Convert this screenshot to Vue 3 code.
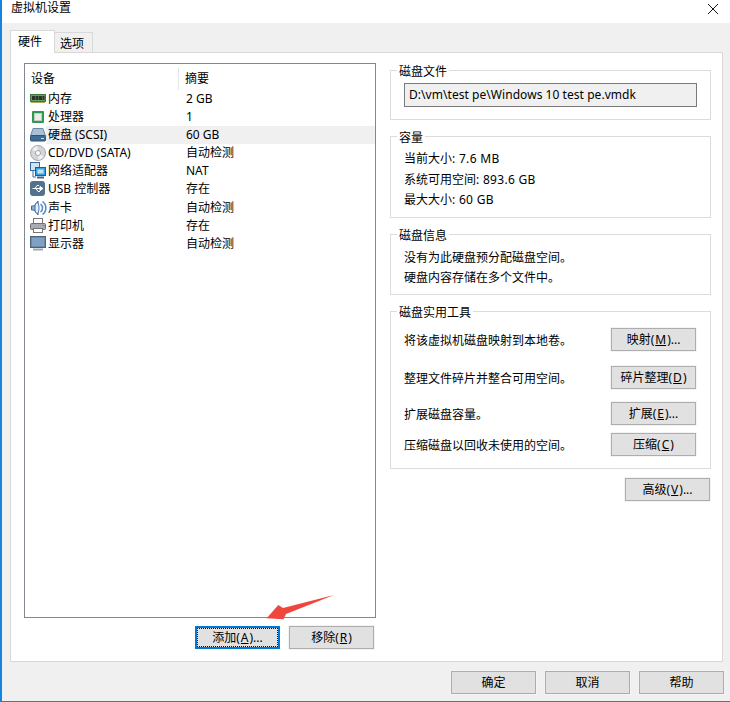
<script setup>
const devices = [
  { id: 'mem', name: '内存', value: '2 GB' },
  { id: 'cpu', name: '处理器', value: '1' },
  { id: 'hdd', name: '硬盘 (SCSI)', value: '60 GB', active: true },
  { id: 'cd', name: 'CD/DVD (SATA)', value: '自动检测' },
  { id: 'net', name: '网络适配器', value: 'NAT' },
  { id: 'usb', name: 'USB 控制器', value: '存在' },
  { id: 'snd', name: '声卡', value: '自动检测' },
  { id: 'prn', name: '打印机', value: '存在' },
  { id: 'mon', name: '显示器', value: '自动检测' },
]
const tools = [
  { text: '将该虚拟机磁盘映射到本地卷。', label: '映射(', key: 'M', tail: ')...', gap: 15 },
  { text: '整理文件碎片并整合可用空间。', label: '碎片整理(', key: 'D', tail: ')', gap: 13 },
  { text: '扩展磁盘容量。', label: '扩展(', key: 'E', tail: ')...', gap: 8 },
  { text: '压缩磁盘以回收未使用的空间。', label: '压缩(', key: 'C', tail: ')', gap: 0 },
]
</script>

<template>
  <div class="window">
    <div class="titlebar">
      <span class="title">虚拟机设置</span>
      <svg class="close" width="12" height="12" viewBox="0 0 12 12"><path d="M1 1L11 11M11 1L1 11" stroke="#111" stroke-width="1" fill="none" /></svg>
    </div>
    <div class="content">
      <div class="tabs">
        <div class="tab tab-on">硬件</div>
        <div class="tab">选项</div>
      </div>
      <div class="panel">
        <div class="left">
          <div class="list">
            <div class="list-head">
              <span class="col-a">设备</span>
              <span class="col-b">摘要</span>
            </div>
            <div class="rows">
              <div v-for="d in devices" :key="d.id" class="row">
                <span class="icon">
                  <svg v-if="d.id === 'mem'" width="18" height="18" viewBox="0 0 18 18">
                    <rect x="0.5" y="4.5" width="15" height="7" fill="#5fa35f" stroke="#3b7a3b" />
                    <rect x="2" y="6" width="3" height="4" fill="#30302c" />
                    <rect x="5.5" y="6" width="3" height="4" fill="#30302c" />
                    <rect x="9" y="6" width="3" height="4" fill="#30302c" />
                    <rect x="12.5" y="6" width="2" height="4" fill="#30302c" />
                    <path d="M1 12.5h14" stroke="#b5a25c" />
                  </svg>
                  <svg v-else-if="d.id === 'cpu'" width="18" height="18" viewBox="0 0 18 18">
                    <rect x="2" y="3" width="12" height="12" rx="1" fill="#2e9a4c" />
                    <rect x="4.5" y="5.5" width="7" height="7" fill="#ececec" stroke="#c9c9c9" />
                  </svg>
                  <svg v-else-if="d.id === 'hdd'" width="18" height="18" viewBox="0 0 18 18">
                    <path d="M3 2.5h10l2.500 7.500h-15z" fill="#a9c0d6" stroke="#6d8aa5" />
                    <rect x="0.5" y="9.500" width="15" height="5.500" rx="1" fill="#3f6d96" stroke="#2e5478" />
                    <rect x="11" y="12" width="3" height="1" fill="#c9e0f0" />
                  </svg>
                  <svg v-else-if="d.id === 'cd'" width="18" height="18" viewBox="0 0 18 18">
                    <circle cx="8" cy="9" r="7.500" fill="#d4d6da" stroke="#a6a8ac" />
                    <path d="M2.500 5.500A7 7 0 0 1 7.500 2L8 9z" fill="#f4f4f6" />
                    <path d="M13.500 12.500A7 7 0 0 1 8.500 16L8 9z" fill="#f0f0f2" />
                    <circle cx="8" cy="9" r="2.500" fill="#fff" stroke="#a0a2a6" />
                  </svg>
                  <svg v-else-if="d.id === 'net'" width="18" height="18" viewBox="0 0 18 18">
                    <rect x="0.5" y="0.5" width="9" height="8" fill="#cfe3f3" stroke="#3a6a9a" />
                    <rect x="5.500" y="5.500" width="10" height="8" fill="#3ea0dc" stroke="#2a5a8a" />
                    <rect x="7.500" y="7.500" width="6" height="4" fill="#bfe4f8" />
                    <path d="M7 15.500h7" stroke="#3a6a9a" stroke-width="2" />
                    <path d="M3 9v6h3" stroke="#3a6a9a" fill="none" />
                  </svg>
                  <svg v-else-if="d.id === 'usb'" width="18" height="18" viewBox="0 0 18 18">
                    <rect x="0" y="1" width="15" height="15" rx="3" fill="#54718d" />
                    <path d="M2.500 8.500h9M10 6.500l3 2-3 2z" stroke="#fff" fill="#fff" />
                    <path d="M5 8.500l2-3h2M6 8.500l2 3h2" stroke="#fff" fill="none" />
                  </svg>
                  <svg v-else-if="d.id === 'snd'" width="18" height="18" viewBox="0 0 18 18">
                    <path d="M1.500 7h2.500l4-5v14l-4-5h-2.500z" fill="#8fb2d8" stroke="#3f6a9f" />
                    <ellipse cx="7" cy="9" rx="2" ry="5.500" fill="#e8f1fa" stroke="#4b78ad" />
                    <path d="M10.500 5a5 5 0 0 1 0 8M12.500 2.500a8 8 0 0 1 0 13" stroke="#4f86c4" stroke-width="1.500" fill="none" />
                  </svg>
                  <svg v-else-if="d.id === 'prn'" width="18" height="18" viewBox="0 0 18 18">
                    <rect x="3.500" y="1.500" width="9" height="5" fill="#fff" stroke="#777" />
                    <rect x="0.5" y="6.500" width="15" height="6" rx="1" fill="#a9adb3" stroke="#6c6f75" />
                    <rect x="3.500" y="11.500" width="9" height="4" fill="#fff" stroke="#777" />
                    <rect x="12.500" y="8" width="2" height="1" fill="#35b54a" />
                  </svg>
                  <svg v-else width="18" height="18" viewBox="0 0 18 18">
                    <rect x="0.5" y="1.500" width="15" height="11" fill="#6f8ba6" stroke="#49637d" />
                    <rect x="2" y="3" width="12" height="8" fill="#7fa2c4" />
                    <path d="M3 14.500h10" stroke="#9aa8b5" stroke-width="2" />
                  </svg>
                </span>
                <span class="name" :class="{ active: d.active }">{{ d.name }}</span>
                <span class="value" :class="{ active: d.active }">{{ d.value }}</span>
              </div>
            </div>
          </div>
          <div class="list-actions">
            <button class="btn btn-default"><span class="focus">添加(<u>A</u>)...</span></button>
            <button class="btn">移除(<u>R</u>)</button>
          </div>
        </div>
        <div class="right">
          <fieldset class="group g-file">
            <legend>磁盘文件</legend>
            <div class="path">D:\vm\test pe\Windows 10 test pe.vmdk</div>
          </fieldset>
          <fieldset class="group g-cap">
            <legend>容量</legend>
            <div class="line">当前大小<span class="lat">: 7.6 MB</span></div>
            <div class="line">系统可用空间<span class="lat">: 893.6 GB</span></div>
            <div class="line">最大大小<span class="lat">: 60 GB</span></div>
          </fieldset>
          <fieldset class="group g-info">
            <legend>磁盘信息</legend>
            <div class="line">没有为此硬盘预分配磁盘空间。</div>
            <div class="line">硬盘内容存储在多个文件中。</div>
          </fieldset>
          <fieldset class="group g-tools">
            <legend>磁盘实用工具</legend>
            <div v-for="t in tools" :key="t.key" class="tool" :style="{ marginBottom: t.gap + 'px' }">
              <span class="tool-text">{{ t.text }}</span>
              <button class="btn">{{ t.label }}<u>{{ t.key }}</u>{{ t.tail }}</button>
            </div>
          </fieldset>
          <div class="adv"><button class="btn">高级(<u>V</u>)...</button></div>
        </div>
      </div>
      <div class="footer">
        <button class="btn">确定</button>
        <button class="btn">取消</button>
        <button class="btn">帮助</button>
      </div>
    </div>
    <svg class="arrow" width="70" height="28" viewBox="0 0 70 28">
      <path d="M0.700 23.300L12.300 10L17 13L68 0L20 19L17.500 24.300Z" fill="#f0473d" />
    </svg>
  </div>
</template>

<style scoped>
.window {
  position: relative;
  width: 730px;
  height: 702px;
  box-sizing: border-box;
  background: #f0f0f0;
  border-left: 2px solid #1584e0;
  border-bottom: 1px solid #1584e0;
  font: 12px/16px "Noto Sans", "Noto Sans CJK SC", sans-serif;
  color: #000;
  overflow: hidden;
  display: flex;
  flex-direction: column;
}
.titlebar {
  height: 23px;
  background: #fff;
  display: flex;
  align-items: center;
  justify-content: space-between;
  padding: 0 12px 7px 9px;
  box-sizing: border-box;
  flex: none;
}
.title { font-size: 12px; }
.close { margin-top: 2px; margin-right: -1px; }
.content { flex: 1; display: flex; flex-direction: column; padding: 7px 7px 0 8px; }
.tabs { display: flex; align-items: flex-end; height: 22px; flex: none; }
.tab {
  width: 38px;
  height: 20px;
  line-height: 21px;
  padding-left: 5px;
  box-sizing: border-box;
  border: 1px solid #d9d9d9;
  border-bottom: none;
  border-left: none;
  background: #f0f0f0;
}
.tab-on {
  width: 45px;
  height: 23px;
  margin-bottom: -1px;
  padding-left: 7px;
  background: #fff;
  position: relative;
  border-left: 1px solid #d9d9d9;
  line-height: 22px;
}
.panel {
  height: 610px;
  box-sizing: border-box;
  background: #fff;
  border: 1px solid #d9d9d9;
  padding: 10px 11px 0 13px;
  display: flex;
  gap: 14px;
  flex: none;
}
.left { width: 352px; flex: none; }
.list {
  height: 555px;
  box-sizing: border-box;
  border: 1px solid #828790;
  background: #fff;
}
.list-head { display: flex; height: 26px; align-items: center; padding-top: 4px; box-sizing: border-box; }
.col-a { width: 154px; padding-left: 6px; box-sizing: border-box; border-right: 1px solid #e5e5e5; height: 22px; line-height: 22px; }
.col-b { padding-left: 6px; height: 22px; line-height: 22px; }
.rows { display: grid; grid-auto-rows: 18.09px; }
.row { display: flex; align-items: center; padding-left: 5px; }
.icon { width: 16px; height: 18px; flex: none; display: block; }
.icon svg { display: block; }
.name { width: 132px; padding-left: 2px; flex: none; height: 18px; line-height: 18px; }
.value { flex: 1; padding-left: 6px; height: 18px; line-height: 18px; }
.active { background: #f0f0f0; }
.list-actions { display: flex; justify-content: flex-end; gap: 9px; margin-top: 8px; padding-right: 2px; }
.right { width: 321px; flex: none; }
.group {
  margin: 0;
  padding: 0 13px;
  border: 1px solid #dcdcdc;
  box-sizing: border-box;
  min-width: 0;
}
.group legend { padding: 0 2px; margin-left: -7px; line-height: 20px; height: 16px; }
.g-file { height: 58px; margin-top: -1px; margin-bottom: 8px; }
.g-cap { height: 90px; margin-bottom: 8px; }
.g-info { height: 69px; margin-bottom: 8px; }
.g-tools { height: 166px; padding-top: 9px; padding-left: 13px; padding-right: 14px; }
.path {
  height: 24px;
  line-height: 22px;
  margin-top: 5px;
  width: 293px;
  box-sizing: border-box;
  padding-left: 4px;
  background: #f0f0f0;
  border: 1px solid #7a7a7a;
  letter-spacing: 0.05px;
}
.line { line-height: 20px; }
.lat { letter-spacing: 0.3px; }
.g-cap .line { line-height: 20.5px; }
.g-cap .line:first-of-type { margin-top: 5px; }
.g-info .line:first-of-type { margin-top: 6px; }
.tool { display: flex; align-items: center; justify-content: space-between; height: 23px; }
.tool-text { padding-top: 2px; }
.adv { display: flex; justify-content: flex-end; margin-top: 9px; padding-right: 1px; }
.btn {
  width: 85px;
  height: 23px;
  padding: 0;
  border: 1px solid #adadad;
  background: #e1e1e1;
  font: inherit;
  color: #000;
  box-shadow: 0 0 0 1px #f4f4f4;
}
.btn u { margin: 0 1px; }
.btn-default { border: 2px solid #0078d7; padding: 0; box-shadow: none; }
.focus { display: block; height: 100%; border: 1px dotted #111; box-sizing: border-box; line-height: 17px; }
.footer { display: flex; justify-content: flex-end; gap: 9px; padding-top: 9px; margin-right: -1px; }
.arrow { position: absolute; left: 264px; top: 595px; }
</style>
